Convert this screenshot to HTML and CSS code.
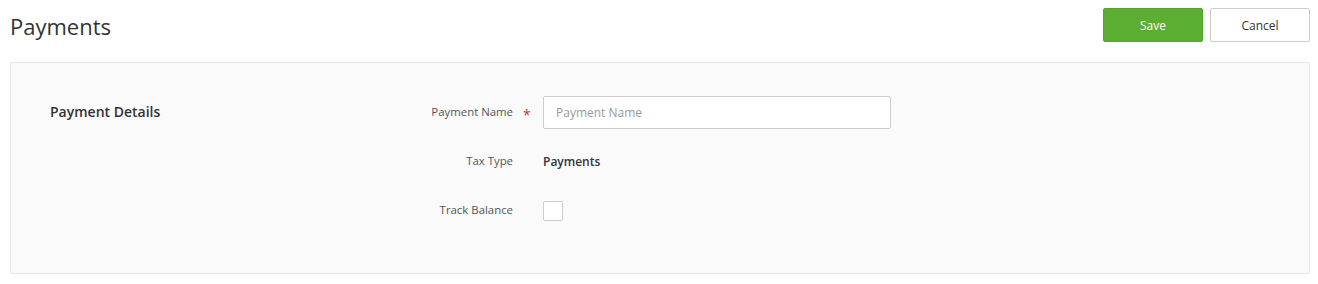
FILE: index.html
```html
<!DOCTYPE html>
<html>
<head>
<meta charset="utf-8">
<link rel="stylesheet" href="styles.css">
</head>
<body>
<header class="page-header">
  <h1 class="page-title">Payments</h1>
  <div class="actions">
    <button class="btn btn-primary">Save</button>
    <button class="btn btn-default">Cancel</button>
  </div>
</header>
<section class="panel">
  <h2 class="section-title">Payment Details</h2>
  <div class="form">
    <div class="row">
      <label class="label">Payment Name</label>
      <span class="req">*</span>
      <input class="input" type="text" placeholder="Payment Name">
    </div>
    <div class="row">
      <span class="label">Tax Type</span>
      <span class="req"></span>
      <span class="value">Payments</span>
    </div>
    <div class="row">
      <span class="label">Track Balance</span>
      <span class="req"></span>
      <span class="checkbox"></span>
    </div>
  </div>
</section>
</body>
</html>
```
FILE: styles.css
```css
* { box-sizing: border-box; }
body {
  margin: 0;
  font-family: "Open Sans", "Liberation Sans", sans-serif;
  color: #333;
  background: #fff;
}
.page-header {
  display: flex;
  justify-content: space-between;
  align-items: flex-start;
  padding: 8px 8px 0 10px;
  height: 62px;
}
.page-title {
  margin: 5px 0 0 0;
  font-size: 22px;
  font-weight: 400;
  line-height: 26px;
  color: #333;
}
.actions { display: flex; gap: 7px; }
.btn {
  width: 100px;
  height: 34px;
  font-family: inherit;
  font-size: 12px;
  border-radius: 2px;
  cursor: pointer;
}
.btn-primary {
  background: #5bae31;
  border: 1px solid #54a52b;
  color: #fff;
}
.btn-default {
  background: #fff;
  border: 1px solid #ccc;
  color: #333;
}
.panel {
  margin: 0 8px 0 10px;
  background: #fafafa;
  border: 1px solid #e6e6e6;
  border-radius: 2px;
  display: flex;
  padding: 25px 39px 37px;
  height: 212px;
}
.section-title {
  margin: 0;
  width: 200px;
  height: 47px;
  display: flex;
  align-items: center;
  font-size: 14px;
  font-weight: 600;
  color: #333;
}
.form { display: flex; flex-direction: column; }
.row {
  display: grid;
  grid-template-columns: 263px 30px 348px;
  align-items: center;
  height: 49px;
}
.label {
  text-align: right;
  font-size: 11.4px;
  color: #555;
  padding-bottom: 2px;
}
.req {
  color: #d0312d;
  font-size: 14px;
  padding-left: 10px;
  padding-top: 4px;
}
.input {
  height: 33px;
  border: 1px solid #ccc;
  border-radius: 2px;
  background: #fff;
  padding: 0 12px;
  font-family: inherit;
  font-size: 12px;
  color: #333;
}
.input::placeholder { color: #999; }
.value { font-size: 12px; font-weight: 600; color: #333; padding-bottom: 1px; }
.checkbox {
  width: 20px;
  height: 20px;
  border: 1px solid #ccc;
  border-radius: 2px;
  background: #fff;
}
```
